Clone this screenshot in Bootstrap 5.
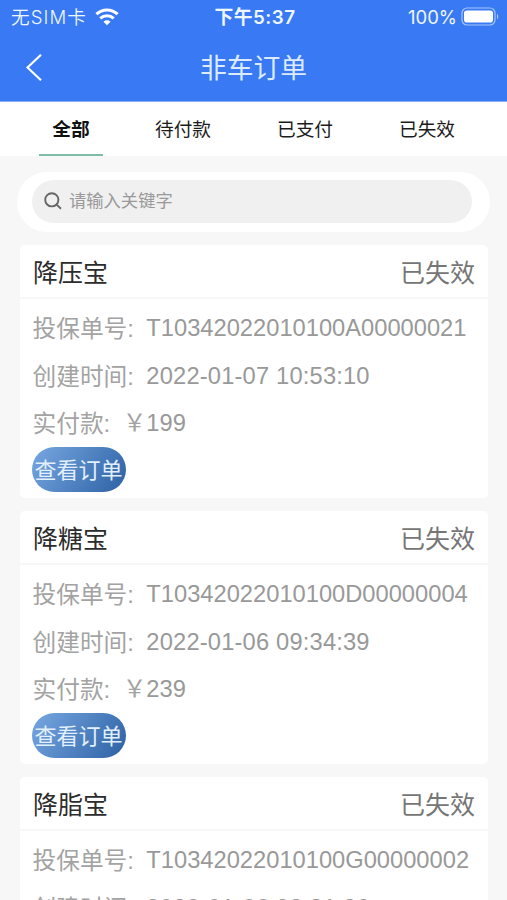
<!DOCTYPE html>
<html lang="zh-CN">
<head>
<meta charset="utf-8">
<meta name="viewport" content="width=device-width, initial-scale=1">
<title>非车订单</title>
<link href="https://cdn.jsdelivr.net/npm/bootstrap@5.3.0/dist/css/bootstrap.min.css" rel="stylesheet">
<style>
html, body { height: 100%; overflow: hidden; }
body { background: #f7f7f7; font-family: "Liberation Sans", "Noto Sans CJK SC", sans-serif; color: #222; }
svg { display: block; flex: none; }
.app { height: 900px; overflow: hidden; }
.app-head { background: #397af4; color: #eef6ff; height: 102px; border-bottom: 1px solid #86aff5; }
.status { height: 34px; padding: 0 8px 0 11px; font: 18.5px/34px Inter, "Noto Sans CJK SC", sans-serif; }
.status > div { flex: 1 1 0; white-space: nowrap; }
.carrier { letter-spacing: 1.1px; font-size: 18.6px; font-weight: 350; }
.clock { font-size: 18.8px; font-weight: 600; letter-spacing: .5px; line-height: 35px; }
.title-bar { height: 67px; padding: 0 26px; }
.title-bar > * { flex: 1 1 0; }
.page-title { font-size: 26.8px; line-height: 65px; padding-bottom: 2px; font-weight: 400; white-space: nowrap; text-align: center; margin: 0; font-family: "Noto Sans CJK SC", sans-serif; color: #dcebff; }
.tabs { height: 54px; padding-left: 39px; gap: 58px; font-size: 18.7px; line-height: 55px; }
.tabs a { width: 64px; height: 54px; color: #1c1c1c; text-align: center; text-decoration: none; white-space: nowrap; }
.tabs a.active { font-weight: 700; border-bottom: 2px solid #7dbda9; margin-right: -10px; color: #111; }
.search-wrap { margin: 16px 17px 0; height: 60px; padding: 8px 18px 9px 15px; border-radius: 30px; }
.search-field { background: #f0f0f0; height: 43px; border-radius: 22px; padding-left: 12px; gap: 7px; color: #999; font-size: 17.3px; line-height: 41px; }
.search-field svg { margin-top: -2px; }
.orders { padding: 13px 19px 0 20px; gap: 13px; }
.order { height: 253px; border-radius: 5px; flex: none; }
.order-head { height: 54px; padding: 0 13px; border-bottom: 2px solid #f7f7f7; font-size: 25px; line-height: 53px; font-family: "Noto Sans CJK SC", sans-serif; color: #2c2c2c; }
.order-head .order-state { color: #767676; }
.order-body { padding: 6px 0 0 12.5px; font-size: 23.7px; line-height: 48px; color: #999; white-space: nowrap; }
.order-body dl { margin: 0 0 -1px; }
.order-body .line { height: 47.5px; }
.order-body dt { font-weight: 400; margin-right: 12.5px; color: #a3a3a3; }
.order-body dd { margin: 0; line-height: 46px; }
.order-body .created { letter-spacing: .18px; }
.order-body .yen { color: #a3a3a3; }
.view-btn { width: 94px; height: 45px; padding: 0; border: 0; border-radius: 23px; background: linear-gradient(125deg, #74a4df 5%, #3468aa 90%); color: #e2effc; font-size: 22px; line-height: 47px; white-space: nowrap; margin-left: -1px; display: block; }
.view-btn:hover { color: #fff; }
</style>
<script src="https://cdn.jsdelivr.net/npm/bootstrap@5.3.0/dist/js/bootstrap.bundle.min.js"></script>
</head>
<body>
<div class="app d-flex flex-column">
  <header class="app-head flex-shrink-0">
    <div class="status d-flex align-items-center">
      <div class="d-flex align-items-center gap-2"><span class="carrier">无SIM卡</span>
        <svg width="24" height="18" viewBox="0 0 24 18" fill="none" stroke="#fff" stroke-width="3.1"><path d="M1.4 6.2C7.4.5 16.6.5 22.600 6.2"/><path d="M5.300 10.400c3.800-3.600 9.600-3.600 13.400 0"/><path d="M8.500 13.700c2-1.800 5-1.800 7 0L12 17.200z" fill="#fff" stroke="none"/></svg>
      </div>
      <div class="clock text-center">下午5:37</div>
      <div class="d-flex align-items-center justify-content-end">
        <span>100%</span>
        <svg class="ms-1" width="38" height="20" viewBox="0 0 38 20"><rect x="1" y="1" width="33" height="17" rx="5" fill="none" stroke="#a5c4fa" stroke-width="1.2"/><rect x="3" y="3.500" width="29" height="12" rx="2.800" fill="#fff"/><path d="M36 6.700c1.700.9 1.700 4.700 0 5.600z" fill="#a5c4fa"/></svg>
      </div>
    </div>
    <div class="title-bar d-flex align-items-center">
      <a href="#" aria-label="返回"><svg width="16" height="27" viewBox="0 0 16 27" fill="none" stroke="#fff" stroke-width="2.2"><path d="M15 .8 1.500 13.500 15 26.200"/></svg></a>
      <h1 class="page-title">非车订单</h1>
      <span></span>
    </div>
  </header>
  <nav class="tabs bg-white d-flex flex-shrink-0">
    <a class="active" href="#">全部</a><a href="#">待付款</a><a href="#">已支付</a><a href="#">已失效</a>
  </nav>
  <div class="search-wrap bg-white flex-shrink-0">
    <div class="search-field d-flex align-items-center">
      <svg width="18" height="18" viewBox="0 0 18 18" fill="none" stroke="#666" stroke-width="1.9"><circle cx="7.800" cy="7.800" r="6.600"/><path d="m12.600 12.600 4.400 4.200"/></svg>
      <span>请输入关键字</span>
    </div>
  </div>
  <main class="orders d-flex flex-column">
    <section class="order bg-white">
      <div class="order-head d-flex justify-content-between"><span>降压宝</span><span class="order-state">已失效</span></div>
      <div class="order-body">
        <dl>
          <div class="line d-flex"><dt>投保单号:</dt><dd>T10342022010100A00000021</dd></div>
          <div class="line d-flex"><dt>创建时间:</dt><dd class="created">2022-01-07 10:53:10</dd></div>
          <div class="line d-flex"><dt>实付款:</dt><dd><span class="yen">￥</span>199</dd></div>
        </dl>
        <button class="btn view-btn" type="button">查看订单</button>
      </div>
    </section>
    <section class="order bg-white">
      <div class="order-head d-flex justify-content-between"><span>降糖宝</span><span class="order-state">已失效</span></div>
      <div class="order-body">
        <dl>
          <div class="line d-flex"><dt>投保单号:</dt><dd>T10342022010100D00000004</dd></div>
          <div class="line d-flex"><dt>创建时间:</dt><dd class="created">2022-01-06 09:34:39</dd></div>
          <div class="line d-flex"><dt>实付款:</dt><dd><span class="yen">￥</span>239</dd></div>
        </dl>
        <button class="btn view-btn" type="button">查看订单</button>
      </div>
    </section>
    <section class="order bg-white">
      <div class="order-head d-flex justify-content-between"><span>降脂宝</span><span class="order-state">已失效</span></div>
      <div class="order-body">
        <dl>
          <div class="line d-flex"><dt>投保单号:</dt><dd>T10342022010100G00000002</dd></div>
          <div class="line d-flex"><dt>创建时间:</dt><dd class="created">2022-01-06 08:31:26</dd></div>
        </dl>
      </div>
    </section>
  </main>
</div>
</body>
</html>
